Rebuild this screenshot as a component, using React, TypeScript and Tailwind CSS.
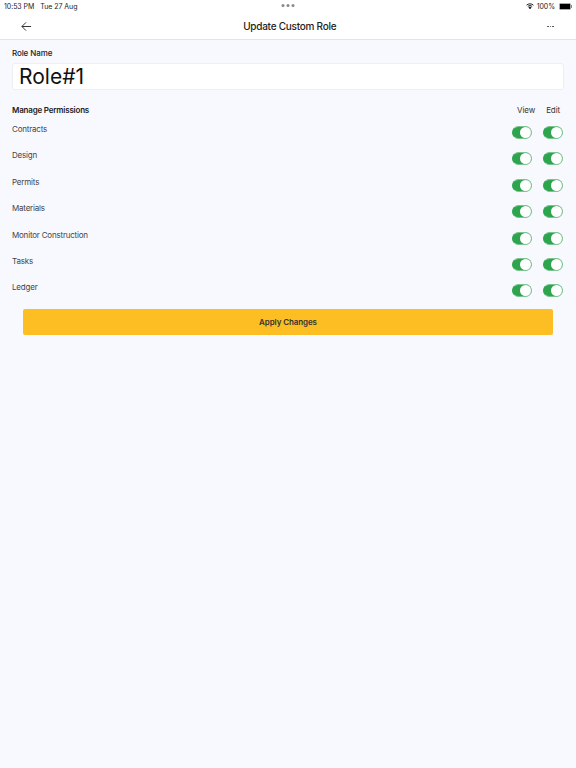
const permissions = [
  'Contracts',
  'Design',
  'Permits',
  'Materials',
  'Monitor Construction',
  'Tasks',
  'Ledger',
]

const Toggle = () => {
  return (
    <div className="flex h-[13px] w-[20px] items-center justify-end rounded-full border border-[#7cc48f] border-l-[#2ea44f] bg-[#2ea44f]">
      <div className="h-[11px] w-[11px] rounded-full bg-white" />
    </div>
  )
}

const StatusBar = () => {
  return (
    <div className="relative flex h-3 items-center justify-between pl-1 pr-[4px] text-[7px] leading-none tracking-[-0.05px] text-[#222]">
      <div className="flex gap-[6px]">
        <span>10:53 PM</span>
        <span>Tue 27 Aug</span>
      </div>
      <div className="absolute left-1/2 top-[4px] flex -translate-x-1/2 gap-[2px]">
        <div className="h-[3px] w-[3px] rounded-full bg-[#8a8a8a]" />
        <div className="h-[3px] w-[3px] rounded-full bg-[#8a8a8a]" />
        <div className="h-[3px] w-[3px] rounded-full bg-[#8a8a8a]" />
      </div>
      <div className="flex items-center">
        <svg className="mr-[3px]" width="8" height="6" viewBox="0 0 18 14" fill="none" stroke="#111" strokeWidth="2.2">
          <path d="M1 5c4.500-4 11.500-4 16 0M4 8c3-2.500 7-2.500 10 0" />
          <path d="M9 13.500 6.500 10.500c1.500-1 3.500-1 5 0Z" fill="#111" />
        </svg>
        <span>100%</span>
        <div className="ml-[4px] flex items-center">
          <div className="h-[7px] w-[12px] rounded-[1.5px] border border-[#aaa] bg-black" />
          <div className="h-[3px] w-px bg-[#888]" />
        </div>
      </div>
    </div>
  )
}

export default function App() {
  return (
    <main className="flex min-h-[768px] flex-col bg-[#f8f9ff] font-['Inter',sans-serif]">
      <header className="border-b border-[#e3e4e8] bg-white">
        <StatusBar />
        <div className="flex h-[27px] items-center justify-between pl-[21px] pr-[22px] pt-[2px]">
          <svg width="11" height="11" viewBox="0 0 12 12" fill="none" stroke="#222" strokeWidth="1">
            <path d="M11 6H1M5.500 1.500 1 6l4.500 4.500" />
          </svg>
          <h1 className="text-[10px] font-medium tracking-[-0.25px] text-[#222]">Update Custom Role</h1>
          <div className="flex gap-px">
            <div className="h-[1.5px] w-[1.5px] rounded-full bg-[#444]" />
            <div className="h-[1.5px] w-[1.5px] rounded-full bg-[#444]" />
            <div className="h-[1.5px] w-[1.5px] rounded-full bg-[#444]" />
          </div>
        </div>
      </header>

      <section className="px-3 pt-[8px]">
        <label className="block text-[8px] font-medium leading-[10px] tracking-[-0.1px] text-[#222]">Role Name</label>
        <div className="mt-[5px] flex h-[27px] items-center rounded-[3px] border border-[#eeeff3] bg-white pl-[6px] text-[21px] text-[#111]">
          Role#1
        </div>

        <div className="mt-[15px] flex items-center justify-between text-[8px] leading-[10px] tracking-[-0.1px] text-[#333]">
          <span className="font-semibold tracking-[-0.2px] text-[#222]">Manage Permissions</span>
          <div className="flex gap-[11px] pr-[4px]">
            <span>View</span>
            <span>Edit</span>
          </div>
        </div>

        <div className="mt-[4px] flex flex-col">
          {permissions.map((name) => (
            <div key={name} className="flex h-[26.4px] items-start justify-between">
              <span className="mt-[5px] text-[8px] leading-[10px] tracking-[-0.2px] text-[#444]">{name}</span>
              <div className="mt-[7px] flex gap-[11px] pr-[1.5px]">
                <Toggle />
                <Toggle />
              </div>
            </div>
          ))}
        </div>

        <button className="mx-[11px] mt-[5px] h-[26.5px] w-[530px] rounded-[2px] bg-[#fdbe23] text-[8px] font-semibold tracking-[-0.1px] text-[#333]">
          Apply Changes
        </button>
      </section>
    </main>
  )
}
